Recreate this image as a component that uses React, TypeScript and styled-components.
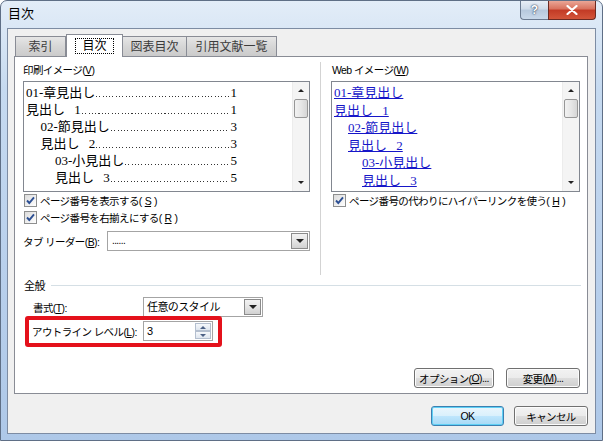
import styled, { createGlobalStyle } from 'styled-components';

const GlobalStyle = createGlobalStyle`
  html, body { margin: 0; padding: 0; background: #fff; }
  body {
    font-family: "Liberation Sans", "Noto Sans CJK JP", sans-serif;
    font-size: 10.5px;
    letter-spacing: -0.6px;
    color: #000;
  }
  *, *::before, *::after { box-sizing: border-box; }
`;

type Entry = { text: string; page: number; level: number };

const entries: Entry[] = [
  { text: '01-章見出し', page: 1, level: 0 },
  { text: '見出し 1', page: 1, level: 0 },
  { text: '02-節見出し', page: 3, level: 1 },
  { text: '見出し 2', page: 3, level: 1 },
  { text: '03-小見出し', page: 5, level: 2 },
  { text: '見出し 3', page: 5, level: 2 },
];

const App: React.FC = () => {
  return (
    <>
      <GlobalStyle />
      <Window>
        <TitleBar>
          <Title>目次</Title>
          <CaptionButtons>
            <HelpButton>?</HelpButton>
            <CloseButton>
              <svg width="12" height="10" viewBox="0 0 12 10">
                <path d="M1.5 1 L10.5 9 M10.5 1 L1.5 9" stroke="#fff" strokeWidth="2.2" strokeLinecap="round" />
              </svg>
            </CloseButton>
          </CaptionButtons>
        </TitleBar>
        <Client>
          <TabStrip>
            <Tab $width={51}>索引</Tab>
            <Tab $width={57} $active>
              <FocusRect>目次</FocusRect>
            </Tab>
            <Tab $width={64}>図表目次</Tab>
            <Tab $width={90}>引用文献一覧</Tab>
          </TabStrip>
          <Panel>
            <TopRow>
              <Column>
                <Label>
                  印刷イメージ(<u>V</u>)
                </Label>
                <PreviewBox>
                  <PreviewList>
                    {entries.map((e) => (
                      <PrintLine key={e.text} $level={e.level}>
                        <EntryText>{e.text}</EntryText>
                        <Leader />
                        <span>{e.page}</span>
                      </PrintLine>
                    ))}
                  </PreviewList>
                  <ScrollBar />
                </PreviewBox>
                <CheckRow>
                  <CheckBox />
                  ページ番号を表示する(<u>S</u>)
                </CheckRow>
                <CheckRow>
                  <CheckBox />
                  ページ番号を右揃えにする(<u>R</u>)
                </CheckRow>
                <LeaderRow>
                  <span>
                    タブ リーダー(<u>B</u>):
                  </span>
                  <Combo $width={203}>
                    <ComboText $small>......</ComboText>
                    <DropButton />
                  </Combo>
                </LeaderRow>
              </Column>
              <Separator />
              <Column>
                <Label $indent={1}>
                  Web イメージ(<u>W</u>)
                </Label>
                <PreviewBox>
                  <PreviewList>
                    {entries.map((e) => (
                      <WebLine key={e.text} $level={e.level}>
                        <EntryText as="a">{e.text}</EntryText>
                      </WebLine>
                    ))}
                  </PreviewList>
                  <ScrollBar />
                </PreviewBox>
                <CheckRow $indent={1}>
                  <CheckBox />
                  ページ番号の代わりにハイパーリンクを使う(<u>H</u>)
                </CheckRow>
              </Column>
            </TopRow>
            <GroupHeader>
              <span>全般</span>
              <GroupLine />
            </GroupHeader>
            <FieldRow>
              <FieldLabel>
                書式(<u>T</u>):
              </FieldLabel>
              <Combo $width={120}>
                <ComboText>任意のスタイル</ComboText>
                <DropButton />
              </Combo>
            </FieldRow>
            <FieldRow $highlight>
              <FieldLabel $shift={-1}>
                アウトライン レベル(<u>L</u>):
              </FieldLabel>
              <SpinBox>
                <ComboText>3</ComboText>
                <SpinButtons>
                  <SpinHalf>
                    <Arrow $up $color="#4d6185" />
                  </SpinHalf>
                  <SpinHalf>
                    <Arrow $color="#4d6185" />
                  </SpinHalf>
                </SpinButtons>
              </SpinBox>
            </FieldRow>
            <PanelButtons>
              <Button $width={80}>
                オプション(<u>O</u>)...
              </Button>
              <Button $width={74}>
                変更(<u>M</u>)...
              </Button>
            </PanelButtons>
          </Panel>
          <Footer>
            <Button $width={73} $default>
              OK
            </Button>
            <Button $width={74}>キャンセル</Button>
          </Footer>
        </Client>
      </Window>
    </>
  );
};

export default App;

const CheckBox: React.FC = () => (
  <Box>
    <svg width="11" height="11" viewBox="0 0 11 11">
      <path d="M2 5.5 L4.3 8 L9 2.3" stroke="#2c4f93" strokeWidth="1.9" fill="none" />
    </svg>
  </Box>
);

const ScrollBar: React.FC = () => (
  <Scroll>
    <ScrollArrow>
      <Arrow $up />
    </ScrollArrow>
    <Track>
      <Thumb />
    </Track>
    <ScrollArrow>
      <Arrow />
    </ScrollArrow>
  </Scroll>
);

const DropButton: React.FC = () => (
  <DropBtn>
    <Arrow $big />
  </DropBtn>
);

const Window = styled.div`
  width: 603px;
  height: 441px;
  display: flex;
  flex-direction: column;
  padding: 0 6px 6px;
  border: 1px solid #5f6f86;
  border-radius: 7px 7px 0 0;
  background: linear-gradient(180deg, #e3edf8 0%, #c6daf0 20%, #b9d0ec 60%, #aec8e8 100%);
`;

const TitleBar = styled.div`
  height: 27px;
  display: flex;
  align-items: flex-start;
`;

const Title = styled.div`
  margin: 5px 0 0 1px;
  font-size: 13px;
  line-height: 16px;
  letter-spacing: 0;
`;

const CaptionButtons = styled.div`
  margin-left: auto;
  display: flex;
`;

const HelpButton = styled.div`
  width: 28px;
  height: 19px;
  border: 1px solid #6a7a90;
  border-top: none;
  border-right: none;
  border-radius: 0 0 0 4px;
  background: linear-gradient(180deg, #e8eef6 0%, #cfdbe9 45%, #b6c8dd 50%, #c9d9ea 100%);
  color: #fff;
  font: bold 12px "Liberation Sans", sans-serif;
  letter-spacing: 0;
  text-shadow: 0 0 2px #2e3f58, 0 0 1px #2e3f58;
  display: flex;
  align-items: center;
  justify-content: center;
`;

const CloseButton = styled.div`
  width: 48px;
  height: 19px;
  border: 1px solid #6b2a22;
  border-top: none;
  border-radius: 0 0 4px 0;
  background: linear-gradient(180deg, #eaa696 0%, #d8705c 45%, #c23a25 50%, #d3553a 100%);
  display: flex;
  align-items: center;
  justify-content: center;
`;

const Client = styled.div`
  flex: 1;
  display: flex;
  flex-direction: column;
  background: #f0f0f0;
  border: 1px solid #7d8ca3;
  padding: 5px 7px 0 6px;
`;

const TabStrip = styled.div`
  display: flex;
  align-items: flex-end;
  height: 23px;
  padding-left: 1px;
  margin-bottom: -1px;
`;

const Tab = styled.div<{ $width: number; $active?: boolean }>`
  width: ${({ $width }) => $width}px;
  height: ${({ $active }) => ($active ? 23 : 20)}px;
  margin-bottom: ${({ $active }) => ($active ? 0 : 1)}px;
  border: 1px solid #898c95;
  border-bottom: none;
  border-left: ${({ $active }) => ($active ? '1px solid #898c95' : 'none')};
  &:first-child {
    border-left: 1px solid #898c95;
  }
  background: ${({ $active }) =>
    $active ? '#fff' : 'linear-gradient(180deg, #e6e6e6 0%, #d6d6d6 50%, #cbcbcb 100%)'};
  color: ${({ $active }) => ($active ? '#000' : '#3c3c3c')};
  position: relative;
  z-index: ${({ $active }) => ($active ? 1 : 0)};
  display: flex;
  align-items: center;
  justify-content: center;
  font-size: 12px;
  line-height: 14px;
  letter-spacing: 0;
`;

const FocusRect = styled.span`
  border: 1px dotted #000;
  padding: 0 6px;
  line-height: 14px;
`;

const Panel = styled.div`
  height: 338px;
  background: #fff;
  border: 1px solid #898c95;
  padding: 4px 6px 5px 8px;
  display: flex;
  flex-direction: column;
`;

const TopRow = styled.div`
  display: grid;
  grid-template-columns: 287px 21px 249px;
  height: 214px;
`;

const Column = styled.div`
  display: flex;
  flex-direction: column;
  min-width: 0;
`;

const Separator = styled.div`
  width: 1px;
  margin: 1px 0 0 10px;
  background: #d3d3d3;
`;

const Label = styled.div<{ $indent?: number }>`
  height: 18px;
  line-height: 18px;
  margin-bottom: 2px;
  padding-left: ${({ $indent }) => $indent ?? 0}px;
  white-space: nowrap;
`;

const PreviewBox = styled.div`
  height: 111px;
  border: 1px solid #828790;
  display: flex;
`;

const PreviewList = styled.div`
  flex: 1;
  min-width: 0;
  padding: 2px 0 0 2px;
  overflow: hidden;
`;

const PrintLine = styled.div<{ $level: number }>`
  width: 211px;
  height: 17px;
  line-height: 17px;
  padding-left: ${({ $level }) => $level * 14.5}px;
  display: flex;
  font-family: "Liberation Serif", "Noto Sans CJK JP", serif;
  font-size: 13px;
  letter-spacing: 0;
  white-space: nowrap;
`;

const EntryText = styled.span`
  word-spacing: 6px;
`;

const Leader = styled.span`
  flex: 1;
  margin: 0 1px 4px;
  background: repeating-linear-gradient(90deg, #333 0 1px, transparent 1px 3.3px) bottom left / 100% 1px no-repeat;
`;

const WebLine = styled.div<{ $level: number }>`
  height: 17.5px;
  line-height: 17px;
  padding-left: ${({ $level }) => $level * 14}px;
  font-family: "Liberation Serif", "Noto Sans CJK JP", serif;
  font-size: 13px;
  letter-spacing: 0;
  white-space: nowrap;
  a {
    color: #1616c8;
    text-decoration: underline;
  }
`;

const Scroll = styled.div`
  width: 17px;
  flex: none;
  display: flex;
  flex-direction: column;
  background: #f4f4f4;
  border-left: 1px solid #ececec;
`;

const ScrollArrow = styled.div`
  height: 17px;
  display: flex;
  align-items: center;
  justify-content: center;
`;

const Track = styled.div`
  flex: 1;
  padding: 0 1px;
`;

const Thumb = styled.div`
  height: 19px;
  border: 1px solid #979797;
  border-radius: 2px;
  background: linear-gradient(90deg, #f2f2f2 0%, #e6e6e6 50%, #d6d6d6 100%);
`;

const Arrow = styled.div<{ $up?: boolean; $big?: boolean; $color?: string }>`
  width: 0;
  height: 0;
  border-left: ${({ $big }) => ($big ? 4 : 3)}px solid transparent;
  border-right: ${({ $big }) => ($big ? 4 : 3)}px solid transparent;
  ${({ $up, $big, $color }) =>
    $up
      ? `border-bottom: ${$big ? 4 : 3}px solid ${$color ?? '#222'};`
      : `border-top: ${$big ? 4 : 3}px solid ${$color ?? '#222'};`}
`;

const CheckRow = styled.div<{ $indent?: number }>`
  height: 17px;
  display: flex;
  align-items: center;
  gap: 3px;
  padding-left: ${({ $indent }) => ($indent ?? 0) + 1}px;
  white-space: nowrap;
`;

const Box = styled.div`
  width: 13px;
  height: 13px;
  flex: none;
  border: 1px solid #8e8f8f;
  background: linear-gradient(135deg, #dcdcdc 0%, #f4f4f4 70%, #fff 100%);
  display: flex;
  align-items: center;
  justify-content: center;
`;

const LeaderRow = styled.div`
  margin-top: 5px;
  height: 20px;
  display: flex;
  align-items: center;
  justify-content: space-between;
  white-space: nowrap;
`;

const Combo = styled.div<{ $width: number }>`
  width: ${({ $width }) => $width}px;
  height: 20px;
  flex: none;
  border: 1px solid #a4a4a4;
  background: #fff;
  display: flex;
  align-items: center;
  padding-right: 1px;
`;

const ComboText = styled.span<{ $small?: boolean }>`
  flex: 1;
  padding-left: ${({ $small }) => ($small ? 4 : 3)}px;
  font-size: ${({ $small }) => ($small ? 10 : 11)}px;
  line-height: 16px;
  white-space: nowrap;
`;

const DropBtn = styled.div`
  width: 17px;
  height: 16px;
  border: 1px solid #8b8b8b;
  background: linear-gradient(180deg, #f2f2f2 0%, #e4e4e4 50%, #d2d2d2 100%);
  display: flex;
  align-items: center;
  justify-content: center;
`;

const GroupHeader = styled.div`
  margin-top: 2px;
  height: 16px;
  display: flex;
  align-items: center;
  padding-left: 1px;
  font-size: 11px;
`;

const GroupLine = styled.div`
  flex: 1;
  height: 1px;
  margin-left: 6px;
  background: #d5dfe5;
`;

const FieldRow = styled.div<{ $highlight?: boolean }>`
  margin-top: 4px;
  height: 20px;
  display: flex;
  align-items: center;
  position: relative;
  ${({ $highlight }) =>
    $highlight
      ? `&::after {
          content: '';
          position: absolute;
          left: 2px;
          top: -5px;
          width: 197px;
          height: 31px;
          border: 4px solid #e4111b;
          border-radius: 3px;
        }`
      : ''}
`;

const FieldLabel = styled.span<{ $shift?: number }>`
  width: 120px;
  flex: none;
  padding-left: ${({ $shift }) => 10 + ($shift ?? 0)}px;
  white-space: nowrap;
`;

const SpinBox = styled.div`
  width: 70px;
  height: 20px;
  border: 1px solid #a4a4a4;
  background: #fff;
  display: flex;
  align-items: center;
  padding-right: 1px;
`;

const SpinButtons = styled.div`
  width: 16px;
  height: 16px;
  display: flex;
  flex-direction: column;
`;

const SpinHalf = styled.div`
  flex: 1;
  border: 1px solid #b4bfcf;
  background: linear-gradient(180deg, #f6f8fb 0%, #dfe6ef 100%);
  display: flex;
  align-items: center;
  justify-content: center;
`;

const PanelButtons = styled.div`
  margin-top: auto;
  display: flex;
  justify-content: flex-end;
  gap: 12px;
  padding-right: 1px;
`;

const Button = styled.div<{ $width: number; $default?: boolean }>`
  width: ${({ $width }) => $width}px;
  height: 20px;
  border: 1px solid ${({ $default }) => ($default ? '#3c7fb1' : '#707070')};
  border-radius: 3px;
  box-shadow: inset 0 0 0 1px ${({ $default }) => ($default ? '#5fd0f5' : '#fcfcfc')};
  background: ${({ $default }) =>
    $default
      ? 'linear-gradient(180deg, #eaf6fd 0%, #d9f0fc 50%, #bee6fd 51%, #a7d9f5 100%)'
      : 'linear-gradient(180deg, #f2f2f2 0%, #ebebeb 50%, #dddddd 51%, #cfcfcf 100%)'};
  display: flex;
  align-items: center;
  justify-content: center;
  white-space: nowrap;
`;

const Footer = styled.div`
  display: flex;
  justify-content: flex-end;
  gap: 10px;
  padding-top: 12px;
`;
